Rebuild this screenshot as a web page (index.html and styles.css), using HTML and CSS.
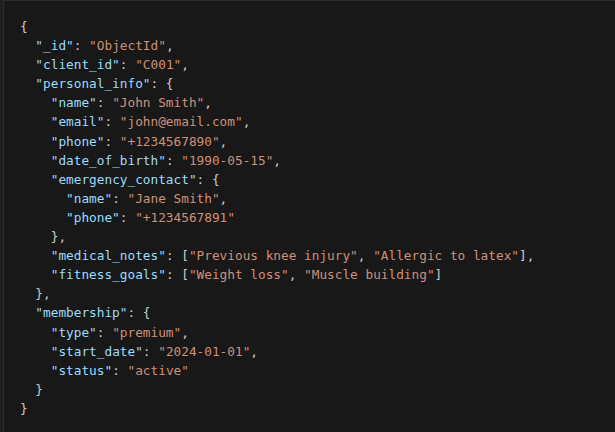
FILE: index.html
```html
<!DOCTYPE html>
<html>
<head>
<meta charset="utf-8">
<link rel="stylesheet" href="styles.css">
</head>
<body>
<div class="block">
<pre class="code"><span class="p">{</span>
  <span class="k">"_id"</span><span class="p">: </span><span class="s">"ObjectId"</span><span class="p">,</span>
  <span class="k">"client_id"</span><span class="p">: </span><span class="s">"C001"</span><span class="p">,</span>
  <span class="k">"personal_info"</span><span class="p">: {</span>
    <span class="k">"name"</span><span class="p">: </span><span class="s">"John Smith"</span><span class="p">,</span>
    <span class="k">"email"</span><span class="p">: </span><span class="s">"john@email.com"</span><span class="p">,</span>
    <span class="k">"phone"</span><span class="p">: </span><span class="s">"+1234567890"</span><span class="p">,</span>
    <span class="k">"date_of_birth"</span><span class="p">: </span><span class="s">"1990-05-15"</span><span class="p">,</span>
    <span class="k">"emergency_contact"</span><span class="p">: {</span>
      <span class="k">"name"</span><span class="p">: </span><span class="s">"Jane Smith"</span><span class="p">,</span>
      <span class="k">"phone"</span><span class="p">: </span><span class="s">"+1234567891"</span>
    <span class="p">},</span>
    <span class="k">"medical_notes"</span><span class="p">: [</span><span class="s">"Previous knee injury"</span><span class="p">, </span><span class="s">"Allergic to latex"</span><span class="p">],</span>
    <span class="k">"fitness_goals"</span><span class="p">: [</span><span class="s">"Weight loss"</span><span class="p">, </span><span class="s">"Muscle building"</span><span class="p">]</span>
  <span class="p">},</span>
  <span class="k">"membership"</span><span class="p">: {</span>
    <span class="k">"type"</span><span class="p">: </span><span class="s">"premium"</span><span class="p">,</span>
    <span class="k">"start_date"</span><span class="p">: </span><span class="s">"2024-01-01"</span><span class="p">,</span>
    <span class="k">"status"</span><span class="p">: </span><span class="s">"active"</span>
  <span class="p">}</span>
<span class="p">}</span></pre>
</div>
</body>
</html>
```

FILE: styles.css
```css
html, body {
  margin: 0;
  padding: 0;
  background: #1f1f1f;
  height: 100%;
  overflow: hidden;
}
.block {
  margin-left: 3px;
  height: 100%;
  background: #181818;
  border-left: 1px solid #2b2b2b;
  border-top: 1px solid #2b2b2b;
  padding: 16px 16px 0 16px;
  box-sizing: border-box;
}
.code {
  margin: 0;
  font-family: "DejaVu Sans Mono", monospace;
  font-size: 12.75px;
  line-height: 19.1px;
  color: #cccccc;
}
.k { color: #9cdcfe; }
.s { color: #ce9178; }
.p { color: #cccccc; }
```
